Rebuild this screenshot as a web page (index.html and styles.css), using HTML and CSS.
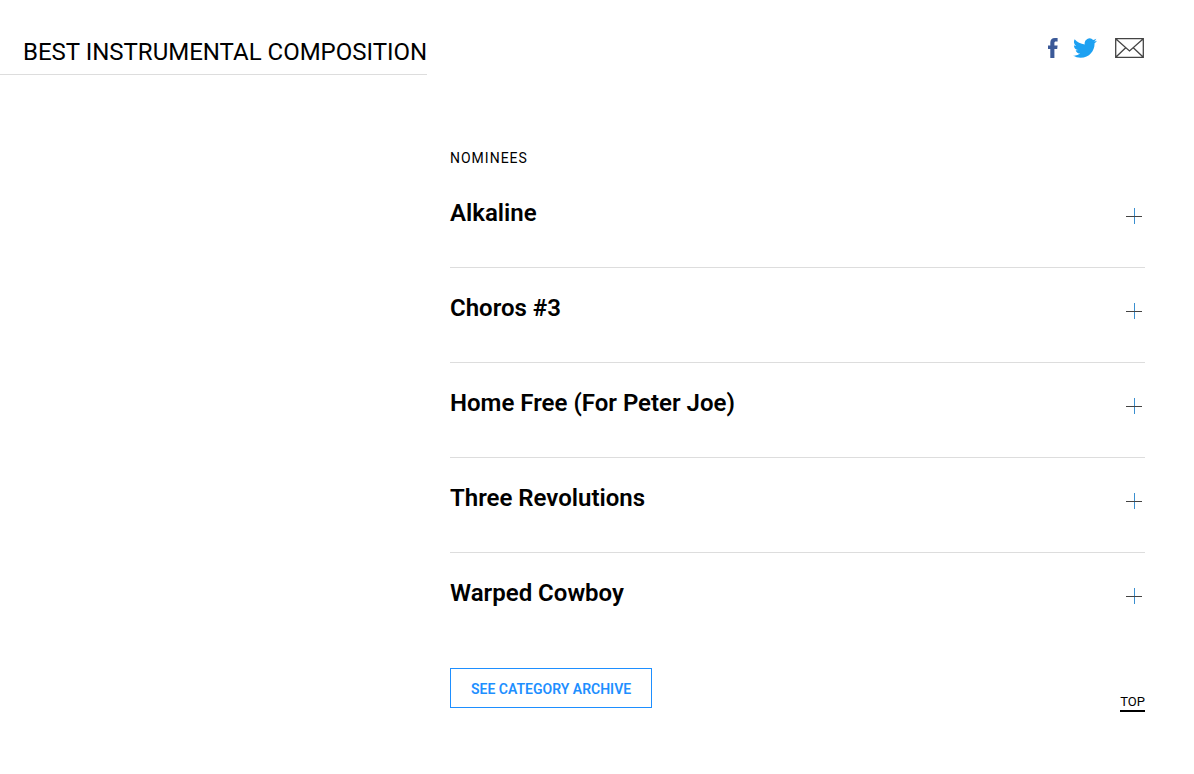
FILE: index.html
```
<!DOCTYPE html>
<html lang="en">
<head>
  <meta charset="UTF-8">
  <meta name="viewport" content="width=device-width, initial-scale=1.0">
  <title>Best Instrumental Composition</title>
  <link rel="stylesheet" href="styles.css">
</head>
<body>
  <section class="category" id="top">
    <header class="category-header">
      <h2 class="category-title">BEST INSTRUMENTAL COMPOSITION</h2>
      <div class="share">
        <a href="#" class="share-facebook" aria-label="Facebook">
          <svg width="10" height="20" viewBox="0 0 10 20"><path d="M2.3 20V11H0V7.4h2.3V4.8C2.3 1.8 3.8 0 6.9 0H9.6v3.6H7.9C6.7 3.6 6.4 4.2 6.4 5.2v2.2h3.2L9.2 11H6.4v9z" fill="#3b5998"/></svg>
        </a>
        <a href="#" class="share-twitter" aria-label="Twitter">
          <svg width="24" height="20" viewBox="0 1.8 24 20.2" preserveAspectRatio="none"><path d="M23.95 4.57a10 10 0 0 1-2.82.77 4.96 4.96 0 0 0 2.16-2.72c-.95.55-2 .95-3.13 1.18a4.92 4.92 0 0 0-8.38 4.48C7.69 8.1 4.07 6.13 1.64 3.16a4.9 4.9 0 0 0 1.52 6.57 4.9 4.9 0 0 1-2.23-.61v.06a4.92 4.92 0 0 0 3.95 4.83 5 5 0 0 1-2.21.08 4.94 4.94 0 0 0 4.6 3.42A9.87 9.87 0 0 1 0 19.54a13.99 13.99 0 0 0 7.55 2.21c9.05 0 14-7.5 14-13.98 0-.21 0-.42-.02-.63a9.94 9.94 0 0 0 2.42-2.57z" fill="#1da1f2"/></svg>
        </a>
        <a href="#" class="share-email" aria-label="Email">
          <svg width="29" height="20" viewBox="0 0 29 20" fill="none" stroke="#444" stroke-width="1.3"><path d="M.7.7h27.6v18.6H.7zM.7.7 14.5 13 28.3.7M.7 19.3l10-9.6M28.3 19.3l-10-9.6"/></svg>
        </a>
      </div>
    </header>

    <div class="category-body">
      <h3 class="label">NOMINEES</h3>
      <div class="nominees">
        <details class="nominee">
          <summary>Alkaline <span class="plus"></span></summary>
        </details>
        <details class="nominee">
          <summary>Choros #3 <span class="plus"></span></summary>
        </details>
        <details class="nominee">
          <summary>Home Free (For Peter Joe) <span class="plus"></span></summary>
        </details>
        <details class="nominee">
          <summary>Three Revolutions <span class="plus"></span></summary>
        </details>
        <details class="nominee">
          <summary>Warped Cowboy <span class="plus"></span></summary>
        </details>
      </div>
      <div class="category-footer">
        <a href="#" class="archive-link">SEE CATEGORY ARCHIVE</a>
        <a href="#top" class="top-link">TOP</a>
      </div>
    </div>
  </section>
</body>
</html>
```

FILE: styles.css
```
* {
  box-sizing: border-box;
}
body {
  margin: 0;
  background: #fff;
  color: #000;
  font-family: Roboto, "Liberation Sans", sans-serif;
}
a {
  color: inherit;
  text-decoration: none;
}
.category {
  padding: 36px 49px 62px 0;
}
.category-header {
  display: flex;
  justify-content: space-between;
  align-items: flex-start;
}
.category-title {
  margin: 0;
  padding: 0 0 6px 23px;
  border-bottom: 1px solid #ddd;
  font-size: 24px;
  line-height: 32px;
  font-weight: 400;
}
.share {
  display: flex;
  gap: 15px;
  padding: 2px 1px 0 0;
}
.share a,
.share svg {
  display: block;
}
.share-email {
  margin-left: 3px;
}
.category-body {
  margin: 73px 0 0 450px;
}
.label {
  margin: 0 0 5px;
  font-size: 14px;
  line-height: 20px;
  font-weight: 400;
  letter-spacing: 1px;
}
.nominee {
  border-bottom: 1px solid #ddd;
}
.nominee:last-child {
  border-bottom: 0;
}
.nominee summary {
  display: flex;
  justify-content: space-between;
  align-items: center;
  padding: 24px 3px 38px 0;
  font-size: 24px;
  line-height: 32px;
  font-weight: 600;
  list-style: none;
  cursor: pointer;
}
.plus {
  width: 16px;
  height: 16px;
  margin-top: 6px;
  background:
    linear-gradient(#444, #444) center / 100% 1px no-repeat,
    linear-gradient(#3a8fd0, #3a8fd0) center / 1px 100% no-repeat;
}
.category-footer {
  display: flex;
  justify-content: space-between;
  align-items: flex-end;
  margin-top: 21px;
}
.archive-link {
  padding: 2px 20px 0;
  border: 1px solid #1e8fff;
  color: #1e8fff;
  font-size: 14px;
  line-height: 36px;
  font-weight: 600;
}
.top-link {
  margin-bottom: -4px;
  border-bottom: 2px solid #000;
  font-size: 13px;
  line-height: 16px;
}

@media (max-width: 900px) {
  .category-body {
    margin-left: 23px;
  }
}
```
